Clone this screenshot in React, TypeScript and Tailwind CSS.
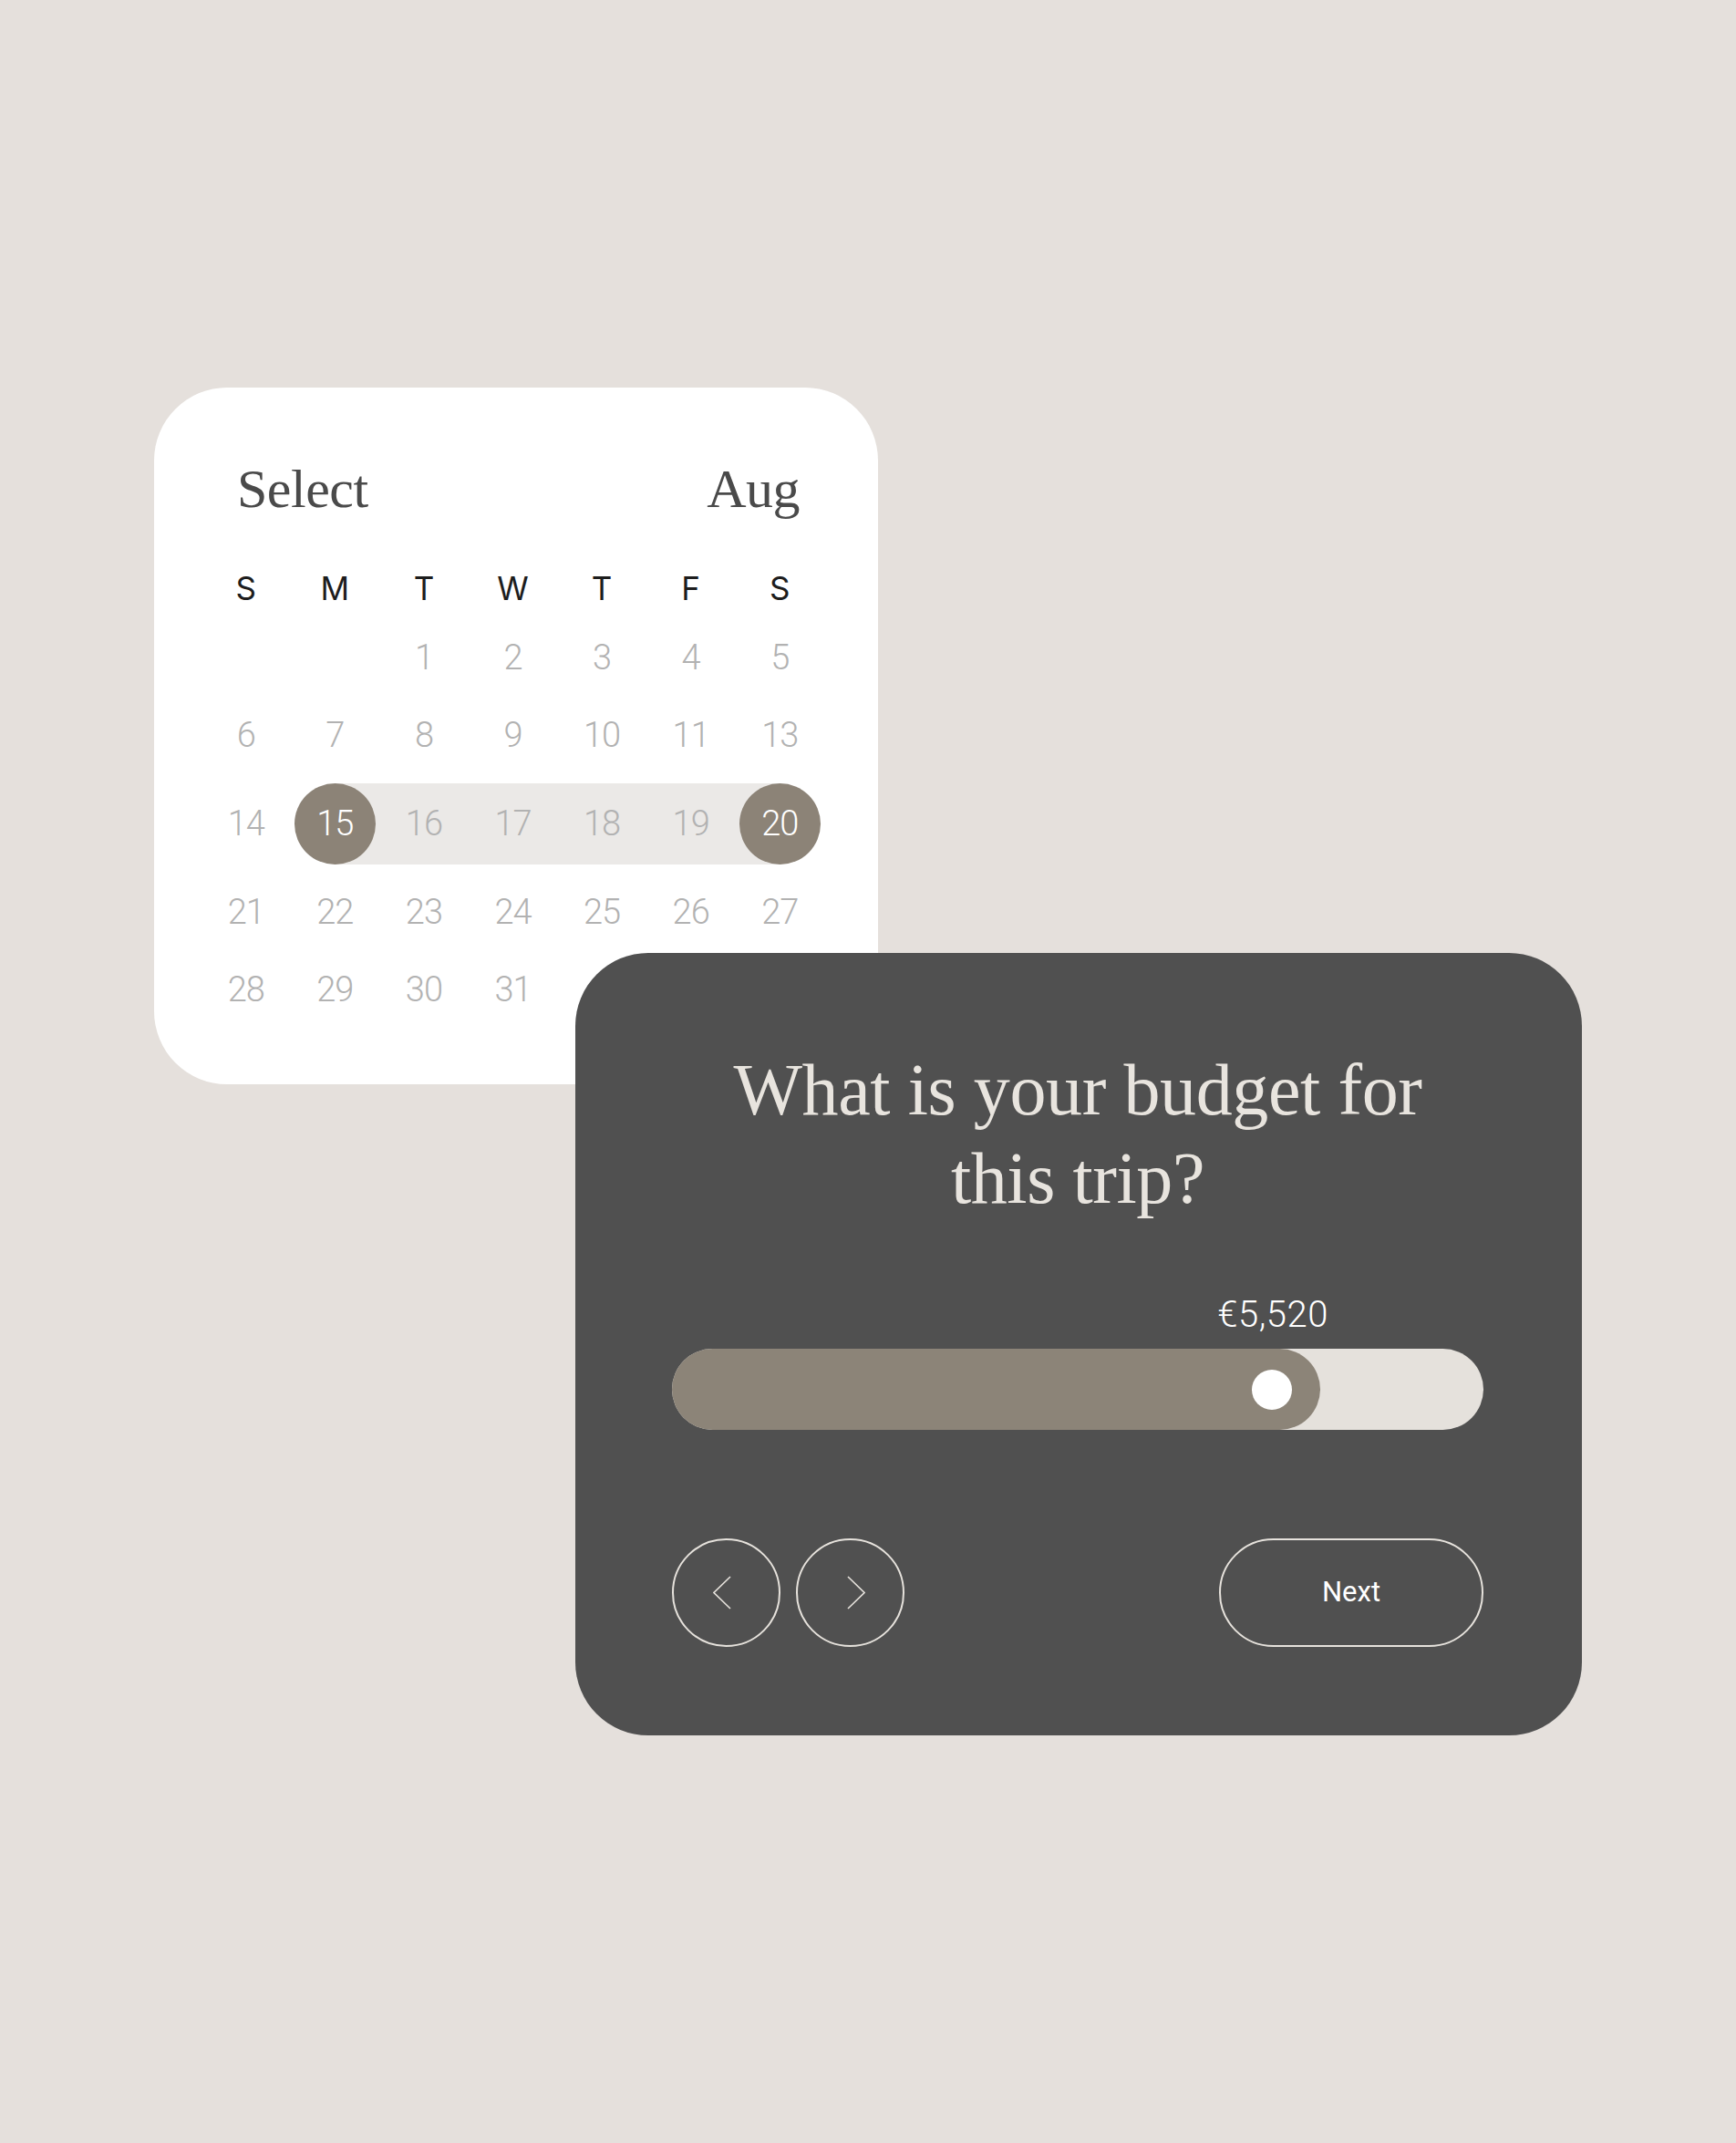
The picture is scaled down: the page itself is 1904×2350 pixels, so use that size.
import type { ReactNode } from 'react';

const weekdays = ['S', 'M', 'T', 'W', 'T', 'F', 'S'];

const weeks: (number | null)[][] = [
    [null, null, 1, 2, 3, 4, 5],
    [6, 7, 8, 9, 10, 11, 13],
    [14, 15, 16, 17, 18, 19, 20],
    [21, 22, 23, 24, 25, 26, 27],
    [28, 29, 30, 31, null, null, null],
];

const colStart = ['col-start-1', 'col-start-2', 'col-start-3', 'col-start-4', 'col-start-5', 'col-start-6', 'col-start-7'];

const rangeStart = 15;
const rangeEnd = 20;

// slider position, 0..1 of the track
const budget = 5520;
const budgetFill = 0.799;

const numFont = "font-['Roboto',sans-serif] font-light text-[38px] tracking-[-1px]";

function DayCell({ day, col }: { day: number | null; col: number }) {
    const isEdge = day === rangeStart || day === rangeEnd;
    return (
        <div className={`${colStart[col]} row-start-1 flex items-center justify-center`}>
            {isEdge ? (
                <div className="w-[89px] h-[89px] rounded-full bg-[#8c8377] flex items-center justify-center text-white">
                    {day}
                </div>
            ) : (
                <span className="text-[#b2b2b2]">{day ?? ''}</span>
            )}
        </div>
    );
}

function WeekRow({ week }: { week: (number | null)[] }) {
    const hasRange = week.includes(rangeStart);
    if (hasRange) {
        return (
            <div className={`grid grid-cols-7 h-[109px] py-[10px] items-center ${numFont}`}>
                <div className="col-start-2 col-span-6 row-start-1 mx-[48.8px] h-[89px] bg-[#ebe9e7]" />
                {week.map((d, i) => (
                    <DayCell key={i} day={d} col={i} />
                ))}
            </div>
        );
    }
    return (
        <div className={`grid grid-cols-7 h-[85px] items-center ${numFont}`}>
            {week.map((d, i) => (
                <DayCell key={i} day={d} col={i} />
            ))}
        </div>
    );
}

function CalendarCard() {
    return (
        <div className="w-[794px] h-[764px] rounded-[80px] bg-white pt-[75px] pl-[52px]">
            <div className="w-[683px]">
                <div className="flex justify-between pl-[39px] pr-[27px] font-['Liberation_Serif',serif] text-[60px] leading-[72px] text-[#4a4a4a] tracking-[-0.5px]">
                    <span>Select</span>
                    <span>Aug</span>
                </div>
                <div className="mt-[51px] grid grid-cols-7 h-[44px] text-center font-['Inter',sans-serif] text-[35px] leading-[44px] text-[#1d1d1d]">
                    {weekdays.map((w, i) => (
                        <span key={i}>{w}</span>
                    ))}
                </div>
                <div className="mt-[12px]">
                    {weeks.map((w, i) => (
                        <WeekRow key={i} week={w} />
                    ))}
                </div>
            </div>
        </div>
    );
}

function RoundButton({ children }: { children: ReactNode }) {
    return (
        <button className="w-[119px] h-[119px] rounded-full border-2 border-[#e6e2dc] flex items-center justify-center">
            {children}
        </button>
    );
}

function BudgetCard() {
    return (
        <div className="w-[1104px] h-[858px] rounded-[80px] bg-[#505050] pl-[106px] pr-[108px] pt-[102px]">
            <h2 className="text-center font-['Liberation_Serif',serif] font-light text-[80px] leading-[97px] text-[#e8e4de] tracking-[-0.4px]">
                What is your budget for
                <br />
                this trip?
            </h2>

            <div className="mt-[77px] h-[48px] flex" style={{ width: `${budgetFill * 100}%` }}>
                <div className="ml-auto -mr-[12px] w-[128px] text-center font-['Roboto',sans-serif] font-light text-[40px] leading-[48px] tracking-[0.5px] text-white">
                    €{budget.toLocaleString('en-US')}
                </div>
            </div>

            <div className="mt-[13px] h-[89px] rounded-full bg-[#e5e1dc]">
                <div
                    className="h-full rounded-full bg-[#8c8478] flex items-center justify-end pr-[31px]"
                    style={{ width: `${budgetFill * 100}%` }}
                >
                    <div className="w-[44px] h-[44px] rounded-full bg-white" />
                </div>
            </div>

            <div className="mt-[119px] flex items-center justify-between">
                <div className="flex gap-[17px]">
                    <RoundButton>
                        <svg width="20" height="37" viewBox="0 0 20 37" fill="none" className="mr-[10px]">
                            <polyline points="19,1 1,18.5 19,36" stroke="#e6e2dc" strokeWidth="1.6" />
                        </svg>
                    </RoundButton>
                    <RoundButton>
                        <svg width="20" height="37" viewBox="0 0 20 37" fill="none" className="ml-[13px]">
                            <polyline points="1,1 19,18.5 1,36" stroke="#e6e2dc" strokeWidth="1.6" />
                        </svg>
                    </RoundButton>
                </div>
                <button className="w-[290px] h-[119px] rounded-full border-2 border-[#e6e2dc] flex items-center justify-center font-['Roboto',sans-serif] text-[31px] text-white">
                    Next
                </button>
            </div>
        </div>
    );
}

export default function App() {
    return (
        <div className="min-h-[2350px] bg-[#e5e0dc] pt-[425px] pl-[169px]">
            <CalendarCard />
            <div className="relative -mt-[144px] ml-[462px]">
                <BudgetCard />
            </div>
        </div>
    );
}
